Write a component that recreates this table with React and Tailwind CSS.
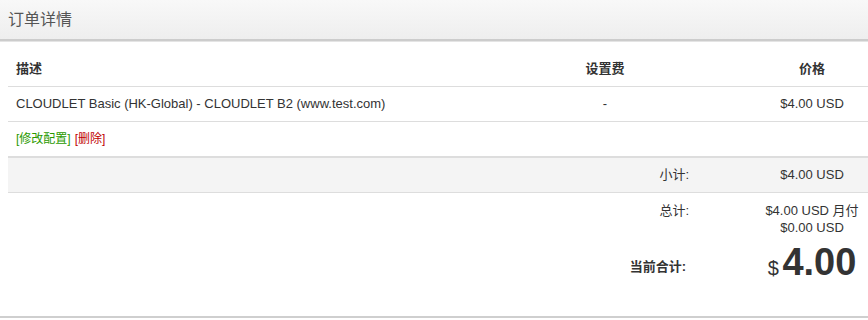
import React from "react";

const font = {
  fontFamily: '"Liberation Sans", Arial, "Noto Sans CJK SC", sans-serif',
};

function App() {
  return (
    <div className="w-[868px] h-[320px] bg-white text-[#333] overflow-hidden" style={font}>
      <div className="h-[41px] bg-gradient-to-b from-[#f8f8f8] to-[#eeeeee] border-b-2 border-[#cccccc] shadow-[0_1px_0_#e4e4e4] flex items-center pl-2">
        <h2 className="text-[16px] text-[#555] leading-none">订单详情</h2>
      </div>
      <div className="pl-2 mt-px border-b-2 border-[#cfcfcf]">
        {/* table head */}
        <div className="grid grid-cols-[446px_302px_112px] text-[13px] font-bold leading-[18px] pt-[18px] pb-[8px] border-b border-[#dddddd]">
          <div className="pl-2">描述</div>
          <div className="text-center">设置费</div>
          <div className="text-center">价格</div>
        </div>
        <div className="grid grid-cols-[446px_302px_112px] h-[35px] items-center text-[13px] border-b border-[#dddddd]">
          <div className="pl-2">CLOUDLET Basic (HK-Global) - CLOUDLET B2 (www.test.com)</div>
          <div className="text-center">-</div>
          <div className="text-center">$4.00 USD</div>
        </div>
        <div className="h-[34px] flex items-center pl-2 text-[12px]">
          <a href="#" className="text-[#2a9a00]">[修改配置]</a>
          <a href="#" className="ml-1 text-[#c00000]">[删除]</a>
        </div>
        {/* subtotal */}
        <div className="grid grid-cols-[1fr_112px] h-[37px] items-center bg-[#f4f4f4] border-t-2 border-b border-[#dddddd] text-[13px]">
          <div className="text-right pr-[67px]">小计:</div>
          <div className="text-center">$4.00 USD</div>
        </div>
        <div className="h-[123px] pt-[9px] text-[13px]">
          <div className="grid grid-cols-[1fr_112px] leading-[17px]">
            <div className="text-right pr-[67px]">总计:</div>
            <div className="text-center">
              <div>$4.00 USD 月付</div>
              <div>$0.00 USD</div>
            </div>
          </div>
          <div className="grid grid-cols-[1fr_112px] items-center mt-[6px]">
            <div className="text-right pr-[70px] font-bold">当前合计:</div>
            <div className="text-center whitespace-nowrap leading-[40px]">
              <span className="text-[20px]">$</span>{" "}
              <span className="text-[38px] font-bold">4.00</span>
            </div>
          </div>
        </div>
      </div>
    </div>
  );
}

export default App;
